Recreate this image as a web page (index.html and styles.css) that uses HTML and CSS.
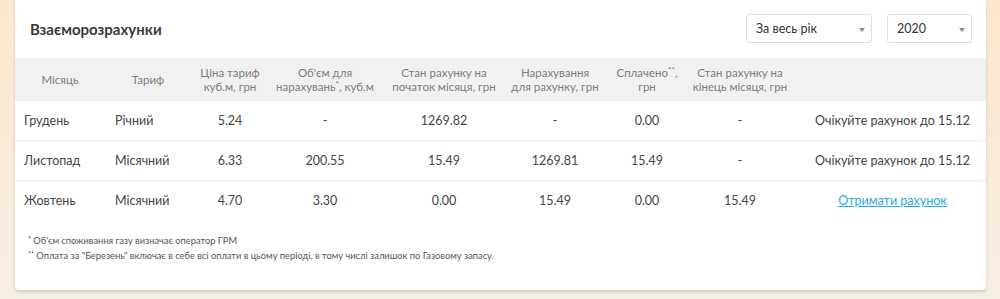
FILE: index.html
```html
<!DOCTYPE html>
<html lang="uk">
<head>
<meta charset="utf-8">
<title>Взаєморозрахунки</title>
<link rel="stylesheet" href="styles.css">
</head>
<body>
<div class="page">
  <section class="card">
    <header class="card-head">
      <h2 class="title">Взаєморозрахунки</h2>
      <div class="filters">
        <div class="select select-period"><span>За весь рік</span><i class="caret"></i></div>
        <div class="select select-year"><span>2020</span><i class="caret"></i></div>
      </div>
    </header>
    <table class="grid">
      <colgroup>
        <col class="c1"><col class="c2"><col class="c3"><col class="c4"><col class="c5"><col class="c6"><col class="c7"><col class="c8"><col class="c9">
      </colgroup>
      <thead>
        <tr>
          <th>Місяць</th>
          <th>Тариф</th>
          <th>Ціна тариф<br>куб.м, грн</th>
          <th>Об'єм для<br>нарахувань<sup>*</sup>, куб.м</th>
          <th>Стан рахунку на<br>початок місяця, грн</th>
          <th>Нарахування<br>для рахунку, грн</th>
          <th>Сплачено<sup>**</sup>,<br>грн</th>
          <th>Стан рахунку на<br>кінець місяця, грн</th>
          <th></th>
        </tr>
      </thead>
      <tbody>
        <tr>
          <td class="left first">Грудень</td>
          <td class="left">Річний</td>
          <td>5.24</td>
          <td>-</td>
          <td>1269.82</td>
          <td>-</td>
          <td>0.00</td>
          <td>-</td>
          <td class="action">Очікуйте рахунок до 15.12</td>
        </tr>
        <tr>
          <td class="left first">Листопад</td>
          <td class="left">Місячний</td>
          <td>6.33</td>
          <td>200.55</td>
          <td>15.49</td>
          <td>1269.81</td>
          <td>15.49</td>
          <td>-</td>
          <td class="action">Очікуйте рахунок до 15.12</td>
        </tr>
        <tr>
          <td class="left first">Жовтень</td>
          <td class="left">Місячний</td>
          <td>4.70</td>
          <td>3.30</td>
          <td>0.00</td>
          <td>15.49</td>
          <td>0.00</td>
          <td>15.49</td>
          <td class="action"><a class="link" href="#">Отримати рахунок</a></td>
        </tr>
      </tbody>
    </table>
    <div class="notes">
      <p><sup>*</sup> Об'єм споживання газу визначає оператор ГРМ</p>
      <p><sup>**</sup> Оплата за "Березень" включає в себе всі оплати в цьому періоді, в тому числі залишок по Газовому запасу.</p>
    </div>
  </section>
</div>
</body>
</html>
```

FILE: styles.css
```css
html, body {
  margin: 0;
  padding: 0;
}
body {
  background: linear-gradient(to bottom, #fce8cc 0%, #f9ecda 60%, #f7eee3 100%);
  font-family: "Lato", "Noto Sans", sans-serif;
  color: #444;
  height: 299px;
  overflow: hidden;
}
.page {
  padding: 0 14px 0 15px;
}
.card {
  background: #fff;
  border-radius: 0 0 4px 4px;
  box-shadow: 0 2px 3px rgba(120, 100, 80, 0.25);
  padding-bottom: 27px;
}
.card-head {
  display: flex;
  align-items: center;
  justify-content: space-between;
  padding: 14px 14px 0 15px;
  height: 29px;
  margin-bottom: 15px;
}
.title {
  margin: 0;
  font-size: 15px;
  font-weight: 700;
  color: #3a3a3a;
}
.filters {
  display: flex;
  gap: 15px;
}
.select {
  box-sizing: border-box;
  height: 29px;
  border: 1px solid #dedede;
  border-radius: 3px;
  display: flex;
  align-items: center;
  justify-content: space-between;
  padding: 0 6px 0 9px;
  font-size: 12.5px;
  color: #333;
}
.select-period { width: 126px; }
.select-year { width: 85px; }
.caret {
  width: 0;
  height: 0;
  border-left: 3px solid transparent;
  border-right: 3px solid transparent;
  border-top: 4px solid #8a8a8a;
  margin-top: 2px;
}
.grid {
  width: 100%;
  table-layout: fixed;
  border-collapse: collapse;
}
col.c1 { width: 90px; }
col.c2 { width: 86px; }
col.c3 { width: 78px; }
col.c4 { width: 112px; }
col.c5 { width: 126px; }
col.c6 { width: 96px; }
col.c7 { width: 88px; }
col.c8 { width: 98px; }
col.c9 { width: 197px; }
.grid thead tr {
  background: #f1f1f1;
}
.grid th {
  height: 43px;
  padding: 0;
  font-size: 11.5px;
  font-weight: 400;
  line-height: 14px;
  color: #7d7d7d;
  text-align: center;
  vertical-align: middle;
}
.grid sup {
  font-size: 8px;
  line-height: 0;
  vertical-align: 4px;
}
.grid td {
  height: 39px;
  padding: 0;
  font-size: 12.5px;
  color: #454545;
  text-align: center;
  vertical-align: middle;
}
.grid tbody tr + tr td {
  border-top: 1px solid #ebebeb;
}
.grid td.left {
  text-align: left;
  padding-left: 10px;
}
.grid td.first {
  padding-left: 9px;
}
.grid td.action {
  padding-left: 10px;
}
.link {
  color: #2ba7e3;
  text-decoration: underline;
}
.notes {
  padding: 13px 0 0 13px;
}
.notes p {
  margin: 0;
  font-size: 9.3px;
  line-height: 15px;
  color: #555;
}
.notes sup {
  font-size: 7px;
  line-height: 0;
  vertical-align: 2px;
}
```
